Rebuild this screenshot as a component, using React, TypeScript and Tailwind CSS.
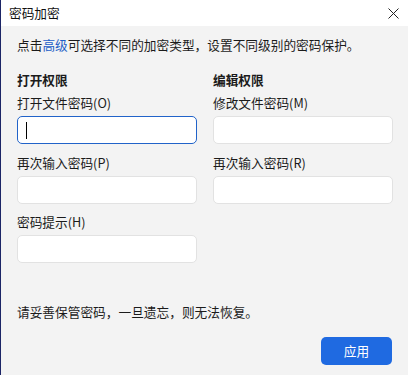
import React from 'react';

const FONT = { fontFamily: '"Noto Sans CJK SC", "Noto Sans", sans-serif' };

interface FieldProps {
    label: string;
    focused?: boolean;
    className?: string;
}

const Field: React.FC<FieldProps> = ({ label, focused, className }) => (
    <div className={className}>
        <div className="leading-[20px]">{label}</div>
        <div
            className={`mt-[3px] h-[28px] rounded-[5px] bg-white flex items-center ${
                focused ? 'border-[1.5px] border-[#2163c9]' : 'border border-[#e2e2e2]'
            }`}
        >
            {focused && <div className="ml-[8px] w-[1px] h-[17px] bg-black" />}
        </div>
    </div>
);

export default function App() {
    return (
        <div
            className="w-[408px] h-[375px] bg-[#f3f3f3] border-l border-[#1c2566] text-[12.7px] text-[#1b1b1b] flex flex-col"
            style={FONT}
        >
            <div className="h-[26px] bg-white flex items-center justify-between pl-[8px] pr-[9px]">
                <span className="text-[12.7px] text-[#111]">密码加密</span>
                <svg width="11" height="11" viewBox="0 0 11 11" className="text-[#222]">
                    <path d="M0.5 0.5 L10.5 10.5 M10.5 0.5 L0.5 10.5" stroke="currentColor" strokeWidth="1" fill="none" />
                </svg>
            </div>

            <div className="px-[16px] flex flex-col flex-1">
                <div className="mt-[9px] leading-[20px]">
                    点击<span className="text-[#1d5ec6]">高级</span>可选择不同的加密类型，设置不同级别的密码保护。
                </div>

                <div className="mt-[15px] grid grid-cols-[180px_180px] gap-x-[16px]">
                    <div>
                        <div className="font-bold leading-[20px]">打开权限</div>
                        <Field label="打开文件密码(O)" focused className="mt-[3px]" />
                        <Field label="再次输入密码(P)" className="mt-[9px]" />
                        <Field label="密码提示(H)" className="mt-[8px]" />
                    </div>
                    <div>
                        <div className="font-bold leading-[20px]">编辑权限</div>
                        <Field label="修改文件密码(M)" className="mt-[3px]" />
                        <Field label="再次输入密码(R)" className="mt-[9px]" />
                    </div>
                </div>

                <div className="mt-[39px] leading-[20px]">请妥善保管密码，一旦遗忘，则无法恢复。</div>

                <div className="mt-[15px] flex justify-end pr-[0px]">
                    <button className="w-[71px] h-[28px] rounded-[5px] bg-[#1f6ae1] text-white text-[12.7px]">
                        应用
                    </button>
                </div>
            </div>
        </div>
    );
}
